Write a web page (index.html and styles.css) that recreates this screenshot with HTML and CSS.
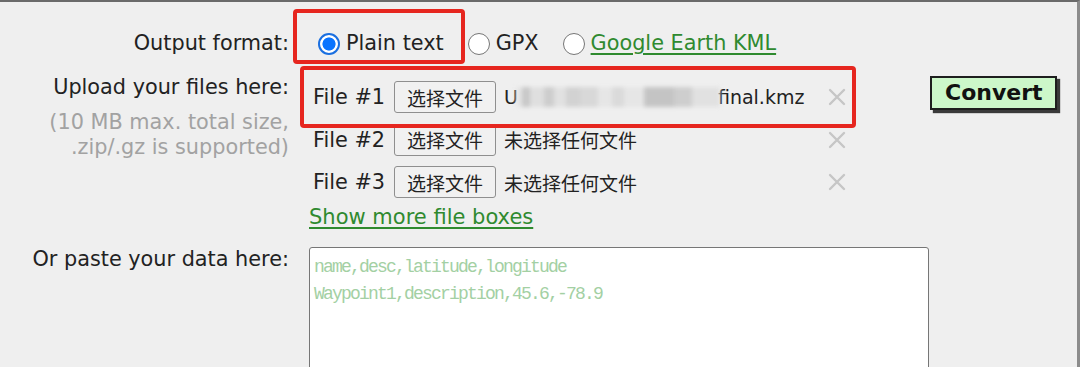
FILE: index.html
```html
<!DOCTYPE html>
<html lang="en">
<head>
<meta charset="utf-8">
<title>GPS Visualizer - Convert</title>
<link rel="stylesheet" href="styles.css">
</head>
<body>
<div class="page">
  <form class="form">
    <div class="label row1">Output format:</div>
    <div class="formats row1">
      <label class="opt"><span class="radio checked"></span><span>Plain text</span></label>
      <label class="opt"><span class="radio"></span><span>GPX</span></label>
      <label class="opt"><span class="radio"></span><a class="link" href="#">Google Earth KML</a></label>
    </div>
    <div class="cell-empty row1"></div>

    <div class="label row2">
      <div>Upload your files here:</div>
      <div class="note">(10 MB max. total size,<br>.zip/.gz is supported)</div>
    </div>
    <div class="files row2">
      <div class="file-row">
        <span class="file-label">File #1</span>
        <span class="file-input"><span class="btn">选择文件</span><span class="fname">U<span class="blur"></span>final.kmz</span></span>
        <svg class="x" viewBox="0 0 18 18" width="18" height="18"><path d="M2 2 L16 16 M16 2 L2 16" stroke="#c6c6c6" stroke-width="2.4" stroke-linecap="round"/></svg>
      </div>
      <div class="file-row">
        <span class="file-label">File #2</span>
        <span class="file-input"><span class="btn">选择文件</span><span class="fname">未选择任何文件</span></span>
        <svg class="x" viewBox="0 0 18 18" width="18" height="18"><path d="M2 2 L16 16 M16 2 L2 16" stroke="#c6c6c6" stroke-width="2.4" stroke-linecap="round"/></svg>
      </div>
      <div class="file-row">
        <span class="file-label">File #3</span>
        <span class="file-input"><span class="btn">选择文件</span><span class="fname">未选择任何文件</span></span>
        <svg class="x" viewBox="0 0 18 18" width="18" height="18"><path d="M2 2 L16 16 M16 2 L2 16" stroke="#c6c6c6" stroke-width="2.4" stroke-linecap="round"/></svg>
      </div>
      <a class="link more" href="#">Show more file boxes</a>
    </div>
    <div class="convert-cell row2"><span class="convert">Convert</span></div>

    <div class="label row3">Or paste your data here:</div>
    <div class="paste row3">
      <div class="textarea"><span class="ph">name,desc,latitude,longitude<br>Waypoint1,description,45.6,-78.9</span></div>
    </div>
    <div class="cell-empty row3"></div>
  </form>
  <div class="mark mark1"></div>
  <div class="mark mark2"></div>
</div>
</body>
</html>
```
FILE: styles.css
```css
html, body {
  margin: 0;
  padding: 0;
  height: 100%;
  overflow: hidden;
}
body {
  background: #efefef;
  font-family: "DejaVu Sans", Verdana, sans-serif;
  font-size: 20.8px;
  color: #222;
}
.page {
  position: relative;
  height: 100%;
  box-sizing: border-box;
  border-top: 2px solid #6a6a6a;
  border-right: 3px solid #8c8c8c;
}
.form {
  display: grid;
  grid-template-columns: 309px 621px auto;
  padding-top: 29px;
}
.label {
  text-align: right;
  padding-right: 20px;
  line-height: 25px;
  white-space: nowrap;
}
.note {
  color: #a2a2a2;
  margin-top: 10px;
}
.row1 { height: 25px; margin-bottom: 19px; }
.row2 { margin-bottom: 17px; }

.formats {
  display: flex;
  align-items: center;
  padding-left: 9px;
  line-height: 25px;
}
.opt {
  display: flex;
  align-items: center;
  gap: 6px;
  margin-right: 24px;
}
.radio {
  width: 22px;
  height: 22px;
  box-sizing: border-box;
  border-radius: 50%;
  border: 1.5px solid #767676;
  background: #fff;
  flex: none;
}
.radio.checked {
  border: 2px solid #1a6fe0;
  background: radial-gradient(circle, #0a74ff 0 6.2px, #fff 6.9px 100%);
}
.link {
  color: #2f8a2f;
  text-decoration: underline;
  text-underline-offset: 3px;
  text-decoration-thickness: 1.5px;
}

.files {
  display: flex;
  flex-direction: column;
  padding-top: 6px;
}
.file-row {
  display: flex;
  align-items: center;
  height: 32px;
  margin-bottom: 10.5px;
  padding-left: 4px;
}
.file-row:nth-child(3) { margin-bottom: 6.5px; }
.file-label {
  width: 81px;
  flex: none;
}
.file-input {
  display: flex;
  align-items: center;
  width: 434px;
  flex: none;
}
.btn {
  font-family: "Noto Sans CJK SC", sans-serif;
  font-size: 19px;
  height: 32px;
  width: 102px;
  box-sizing: border-box;
  border: 1.5px solid #8f8f8f;
  border-radius: 3px;
  background: #f1f1f1;
  display: flex;
  align-items: center;
  justify-content: center;
  color: #222;
}
.fname {
  margin-left: 8px;
  font-family: "DejaVu Sans", "Noto Sans CJK SC", sans-serif;
  font-size: 19px;
  white-space: nowrap;
  display: flex;
  align-items: center;
}
.blur {
  display: inline-block;
  width: 204px;
  height: 20px;
  margin-left: -2px;
  margin-right: -2px;
  background:
    linear-gradient(90deg,
      #e4e4e4 0 6px, #c4c4c4 6px 14px, #dedede 14px 28px, #cacaca 28px 38px,
      #e0e0e0 38px 50px, #cfcfcf 50px 64px, #d6d6d6 64px 82px, #e6e6e6 82px 96px,
      #d8d8d8 96px 108px, #e6e6e6 108px 128px, #c0c0c0 128px 158px, #cbcbcb 158px 176px,
      #e0e0e0 176px 204px);
  filter: blur(2px);
  opacity: 0.9;
}
.x { flex: none; }
.more {
  line-height: 25px;
  align-self: flex-start;
  font-size: 21px;
}

.convert-cell {
  display: flex;
  align-items: flex-start;
}
.convert {
  display: inline-block;
  margin-top: 1px;
  font-weight: bold;
  font-size: 22px;
  line-height: 30px;
  padding: 0 12px 0 13px;
  background: #ccf7c9;
  border: 2px solid #1e1e1e;
  box-shadow: 3px 3px 1px #3a3a3a;
  color: #111;
}

.textarea {
  width: 620px;
  height: 160px;
  box-sizing: border-box;
  background: #fff;
  border: 1.5px solid #767676;
  border-radius: 3px;
  padding: 6px 4px;
  font-family: "Liberation Mono", monospace;
  font-size: 18px;
  line-height: 27px;
}
.ph {
  letter-spacing: -1.8px;
  color: #a3d0a3;
}

.mark {
  position: absolute;
  border: 4px solid #e6261f;
  border-radius: 4px;
  box-sizing: border-box;
}
.mark1 { left: 293px; top: 7px; width: 172px; height: 55px; }
.mark2 { left: 300px; top: 64px; width: 556px; height: 62px; }
```
